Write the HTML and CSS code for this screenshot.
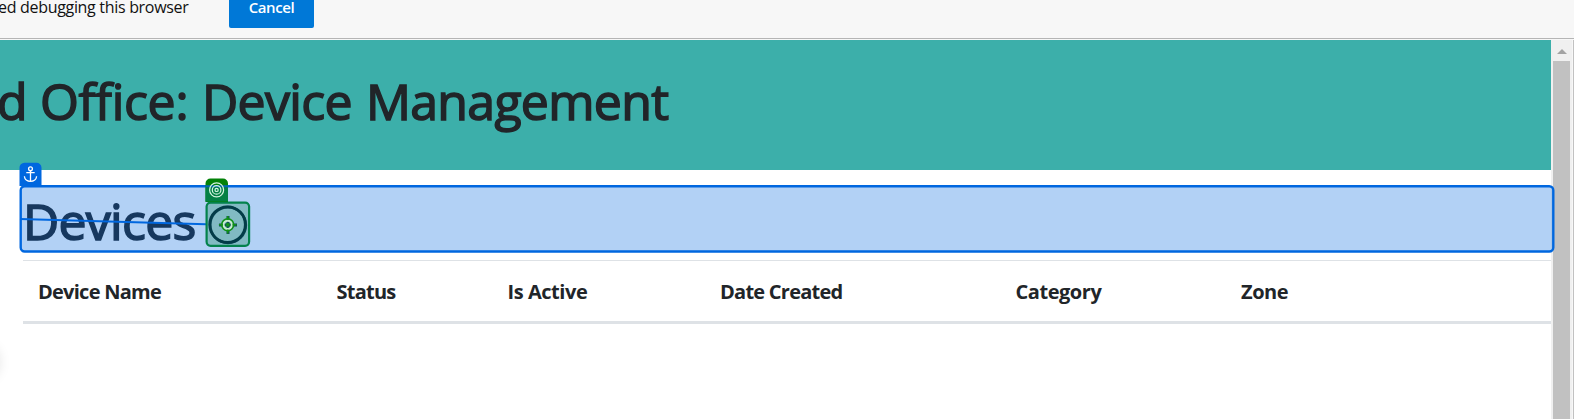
FILE: index.html
```html
<!DOCTYPE html>
<html lang="en">
<head>
<meta charset="utf-8">
<title>Device Management</title>
<link rel="stylesheet" href="styles.css">
</head>
<body>
<div class="infobar">
  <span class="message"><span class="fit">ed debugging this browser</span></span>
  <button class="cancel">Cancel</button>
</div>
<div class="viewport">
  <main class="page">
    <header class="banner"><h1 class="title"><span class="word first">d</span><span class="word second">Office:</span><span class="word third">Device</span><span class="word">Management</span></h1></header>
    <section class="content">
      <h2 class="heading"><span class="label">Devices</span>
        <svg class="add" viewBox="0 0 40 40"><circle cx="20" cy="20" r="17.8" fill="none" stroke="#111c26" stroke-width="2.7"/><path d="M20 11v18M11 20h18" stroke="#152026" stroke-width="3"/></svg>
      </h2>
      <div class="table-head">
        <span class="tight">Device Name</span><span class="tight">Status</span><span>Is Active</span><span class="tight">Date Created</span><span>Category</span><span>Zone</span>
      </div>
    </section>
    <div class="edge-shadow"></div>
  </main>
  <div class="scrollbar">
    <svg class="arrow" viewBox="0 0 10 5"><path d="M0 5L5 0L10 5Z" fill="#a3a3a3"/></svg>
    <div class="thumb"></div>
  </div>
</div>
<svg class="overlay" viewBox="0 0 1574 419">
  <rect x="20.7" y="186.2" width="1532.6" height="65.3" rx="4" fill="#0067df" fill-opacity=".3" stroke="#0067df" stroke-width="2.4"/>
  <path d="M19.5 186v-18a5 5 0 0 1 5-5.3h12a5 5 0 0 1 5 5v18.3z" fill="#0067df"/>
  <g fill="none" stroke="#fff" stroke-width="1.3"><circle cx="30.5" cy="168.8" r="1.9"/><path d="M30.5 170.7v10.6M26.3 172.7h8.4M24.4 176.3c.2 3 2.8 5 6.1 5s5.9-2 6.1-5"/></g>
  <path d="M20 219L206 224.3" stroke="#0067df" stroke-width="2"/>
  <rect x="206.6" y="202.6" width="42.5" height="43.2" rx="4" fill="#108450" fill-opacity=".3" stroke="#03824c" stroke-width="2.2"/>
  <path d="M205.5 202v-18.5a5 5 0 0 1 5-5h12.5a5 5 0 0 1 5 5v18.5z" fill="#038108"/>
  <path d="M205.5 187.5h22.5v14h-22.5z" fill="#038044"/>
  <path d="M205.5 186.3h22.5" stroke="#0368b0" stroke-width="2.2"/>
  <g fill="none" stroke="#d4f5df" stroke-width="1.2"><circle cx="216.6" cy="189.9" r="7"/><circle cx="216.6" cy="189.9" r="4.3"/><circle cx="216.6" cy="189.9" r="1.6"/></g>
  <circle cx="227.7" cy="224.8" r="20" fill="none"/>
  <circle cx="227.5" cy="224.6" r="17.8" fill="none" stroke="#033c48" stroke-width="2.7"/>
  <g fill="none" stroke="#119218" stroke-width="1.6"><circle cx="227.7" cy="224.8" r="4.2" stroke="#c8edd0" stroke-width="2.2"/><circle cx="227.7" cy="224.8" r="6"/><path d="M227.7 216v4M227.7 229.6v4M218.9 224.8h4M232.5 224.8h4"/></g>
  <circle cx="227.7" cy="224.8" r="2" fill="#119218"/>
</svg>
</body>
</html>
```
FILE: styles.css
```css
* { box-sizing: border-box; }
body { margin: 0; height: 419px; overflow: hidden; background: #fff; color: #212529; font-family: "Segoe UI", "Open Sans", "Noto Sans", sans-serif; position: relative; }
.infobar { height: 40px; display: flex; align-items: flex-start; background: #f7f7f7; box-shadow: inset 0 -1px #f7f7f7, inset 0 -2px #b5b5b5; }
.message { width: 229px; font-size: 16px; line-height: 14px; color: #111; white-space: nowrap; }
.fit { display: inline-block; letter-spacing: -.31px; margin-left: -2px; }
.cancel { width: 85px; height: 28px; padding: 0 0 14px; border: 0; border-radius: 0 0 2px 2px; background: #0078d7; color: #fff; font: 600 15px/14px "Segoe UI", "Open Sans", sans-serif; letter-spacing: -.4px; }
.viewport { display: flex; height: 379px; }
.page { flex: 1; position: relative; }
.banner { height: 130px; background: #3cafaa; overflow: hidden; }
.title, .heading { margin: 0; font-weight: 500; font-size: 50px; -webkit-text-stroke: 1.5px #212529; }
.title { display: flex; padding-top: 27px; line-height: 68px; white-space: nowrap; }
.word { letter-spacing: -.7px; }
.first { margin-left: -3px; width: 43px; }
.second { width: 162px; letter-spacing: -.3px; }
.third { width: 164px; }
.content { padding-left: 23px; }
.heading { display: flex; align-items: center; height: 90px; padding-top: 12px; line-height: 68px; letter-spacing: -.75px; }
.label { width: 172px; }
.add { width: 40px; height: 40px; margin: 7px 0 0 12.5px; }
.table-head { display: grid; grid-template-columns: 298.5px 171px 212.5px 295.5px 225.5px 1fr; height: 64px; padding: 16px 0 0 15px; border-top: 1px solid #dee2e6; border-bottom: 3px solid #dee2e6; font-size: 20px; font-weight: 700; line-height: 30px; letter-spacing: -.45px; }
.tight { letter-spacing: -.75px; }
.edge-shadow { position: absolute; left: -40px; top: 300px; width: 40px; height: 40px; border-radius: 50%; box-shadow: 0 2px 12px rgba(0,0,0,.1); }
.scrollbar { width: 23px; padding: 9px 0 0 2px; background: #f0f0f0; box-shadow: inset -1px 0 #c1c1c1, inset -2px 0 #f7f7f7; }
.arrow { display: block; width: 10px; height: 5px; margin-left: 4px; }
.thumb { width: 17px; height: 358px; margin-top: 7px; background: #c1c1c1; }
.overlay { position: absolute; left: 0; top: 0; width: 1574px; height: 419px; }
```
